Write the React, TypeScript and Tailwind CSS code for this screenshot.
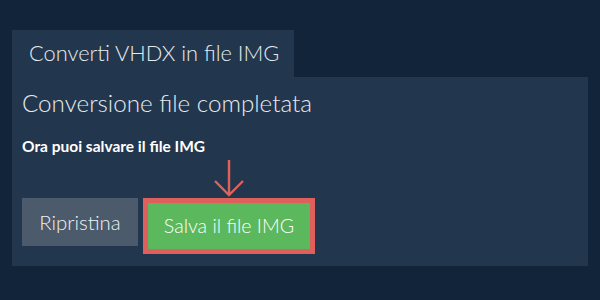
export default function App() {
  return (
    <div
      className="h-[300px] w-[600px] bg-[#11243a] pt-[30px] pl-3"
      style={{ fontFamily: "Lato, 'Noto Sans', sans-serif" }}
    >
      <div className="flex h-[47px] w-[282px] items-center bg-[#22374d] pl-[17px] pb-[1px] text-[21.8px] font-light text-[#e6ebf0]">
        Converti VHDX in file IMG
      </div>
      <div className="h-[189px] w-[576px] bg-[#22374d] px-[10px] pt-[11px]">
        <h1 className="text-[24.2px] leading-[30px] font-light text-[#e6ebf0]">Conversione file completata</h1>
        <p className="mt-[17px] text-[15.5px] leading-[22px] font-bold text-white">Ora puoi salvare il file IMG</p>
        <div className="mt-[2px] flex items-start gap-[5px]">
          <div className="mt-[39px] flex h-[48px] w-[116px] items-center justify-center bg-[#4b5b6b] text-[20.4px] font-light text-[#eef2f5]">
            Ripristina
          </div>
          <div className="flex flex-col items-center">
            <svg width="30" height="39" viewBox="0 0 30 39">
              <path d="M15 1 V36 M1 22 L15 36 L29 22" fill="none" stroke="#e0605a" strokeWidth="2.4" />
            </svg>
            <div className="border-[5px] border-[#de5f5b]">
              <div className="flex h-[46px] w-[162px] items-center justify-center bg-[#5cb85c] text-[19.6px] font-light text-white">
                Salva il file IMG
              </div>
            </div>
          </div>
        </div>
      </div>
    </div>
  );
}
